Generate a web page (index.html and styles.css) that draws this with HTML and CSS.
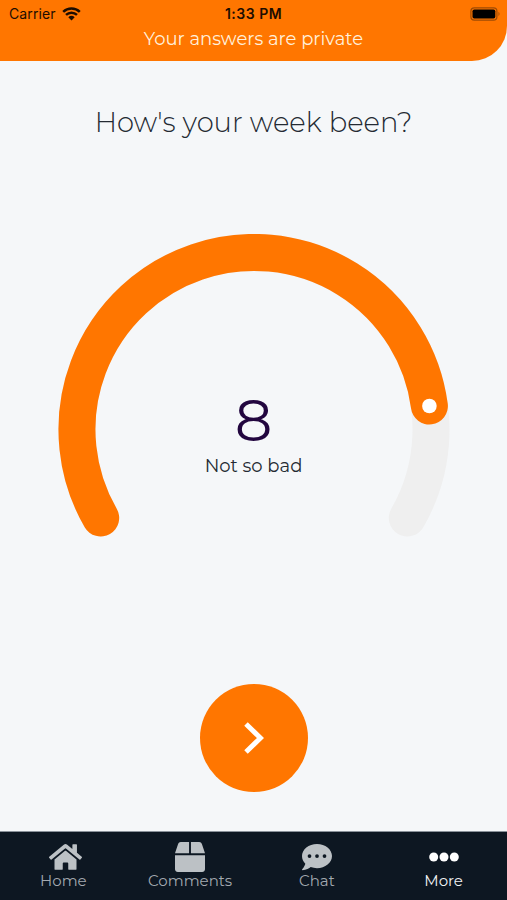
FILE: index.html
```html
<!DOCTYPE html>
<html lang="en">

<head>
  <meta charset="UTF-8">
  <meta name="viewport" content="width=device-width, initial-scale=1.0">
  <title>Your week</title>
  <link rel="stylesheet" href="styles.css">
</head>

<body>
  <header class="header">
    <div class="status">
      <div class="carrier">
        <span>Carrier</span>
        <svg width="19" height="14" viewBox="0 0 19 14">
          <path d="M1.2 4.9a12 12 0 0 1 16.6 0M4 7.9a8 8 0 0 1 11 0" fill="none" stroke="#1d0d00" stroke-width="2.5" />
          <path d="M9.5 13.6L6.3 10.3a4.7 4.7 0 0 1 6.4 0z" fill="#1d0d00" />
        </svg>
      </div>
      <div class="time">1:33 PM</div>
      <div class="battery">
        <svg width="31" height="14" viewBox="0 0 31 14">
          <rect x=".9" y=".8" width="26" height="12.4" rx="3.4" fill="none" stroke="#9e4b05" stroke-width="1.2" />
          <rect x="2.5" y="2.5" width="22.8" height="9" rx="1.8" fill="#000" />
          <path d="M28.5 4.8q2 2.2 0 4.4z" fill="#9e4b05" />
        </svg>
      </div>
    </div>
    <p class="private">Your answers are private</p>
  </header>

  <main class="main">
    <h1 class="title">How's your week been?</h1>

    <div class="dial">
      <svg class="ring" width="392" height="306" viewBox="0 0 392 306">
        <path class="track" d="M42.7 284A177 177 0 1 1 349.3 284" />
        <path class="value" d="M42.7 284A177 177 0 1 1 371.4 172" />
        <circle cx="371.4" cy="172" r="7.3" fill="#fff" />
      </svg>
      <div class="score">
        <strong class="number">8</strong>
        <span class="label">Not so bad</span>
      </div>
    </div>

    <button class="next" aria-label="Next">
      <svg width="20" height="32" viewBox="0 0 20 32">
        <path d="M2 2L16.5 16L2 30" fill="none" stroke="#fff" stroke-width="5" />
      </svg>
    </button>
  </main>

  <nav class="tabs">
    <a class="tab">
      <svg class="home-icon" width="33" height="30" viewBox="0 0 576 512">
        <path d="M280.37 148.26L96 300.11V464a16 16 0 0 0 16 16l112.06-.29a16 16 0 0 0 15.92-16V368a16 16 0 0 1 16-16h64a16 16 0 0 1 16 16v95.64a16 16 0 0 0 16 16.05L464 480a16 16 0 0 0 16-16V300L295.67 148.26a12.19 12.19 0 0 0-15.3 0zM571.6 251.47L488 182.56V44.05a12 12 0 0 0-12-12h-56a12 12 0 0 0-12 12v72.61L318.47 43a48 48 0 0 0-61 0L4.34 251.47a12 12 0 0 0-1.6 16.9l25.5 31A12 12 0 0 0 45.15 301l235.22-193.74a12.19 12.19 0 0 1 15.3 0L530.9 301a12 12 0 0 0 16.9-1.6l25.5-31a12 12 0 0 0-1.7-16.93z" />
      </svg>
      <span>Home</span>
    </a>
    <a class="tab">
      <svg width="30" height="30" viewBox="0 0 512 512">
        <path d="M509.5 184.6L458.9 32.8C452.4 13.2 434.1 0 413.4 0H272v192h238.7c-.4-2.5-.4-5-1.2-7.4zM240 0H98.6c-20.7 0-39 13.2-45.5 32.8L2.5 184.6c-.8 2.4-.8 4.9-1.2 7.4H240V0zM0 224v240c0 26.5 21.5 48 48 48h416c26.5 0 48-21.5 48-48V224H0z" />
      </svg>
      <span>Comments</span>
    </a>
    <a class="tab">
      <svg width="30" height="30" viewBox="0 0 512 512">
        <path d="M256 32C114.6 32 0 125.1 0 240c0 49.6 21.4 95 57 130.7C44.5 421.1 2.7 466 2.2 466.5c-2.2 2.3-2.8 5.7-1.5 8.7S4.8 480 8 480c66.3 0 116-31.8 140.6-51.4 32.7 12.3 69 19.4 107.4 19.4 141.4 0 256-93.1 256-208S397.4 32 256 32z" />
        <g fill="#0d1722">
          <circle cx="128" cy="240" r="32" />
          <circle cx="256" cy="240" r="32" />
          <circle cx="384" cy="240" r="32" />
        </g>
      </svg>
      <span>Chat</span>
    </a>
    <a class="tab active">
      <svg width="30" height="30" viewBox="0 0 30 30">
        <circle cx="4.7" cy="15" r="4.5" />
        <circle cx="15" cy="15" r="4.5" />
        <circle cx="25.3" cy="15" r="4.5" />
      </svg>
      <span>More</span>
    </a>
  </nav>
</body>

</html>
```

FILE: styles.css
```css
* {
  padding: 0;
  margin: 0;
  box-sizing: border-box;
}

body {
  display: flex;
  flex-direction: column;
  height: 900px;
  background: #f5f7f9;
  font-family: Montserrat, Inter, "Open Sans", sans-serif;
  color: #242a33;
  overflow: hidden;
}

.header {
  height: 61px;
  background: #ff7600;
  border-bottom-right-radius: 35px;
}

.status {
  display: grid;
  grid-template-columns: 1fr auto 1fr;
  align-items: center;
  height: 27px;
  padding: 0 6px 0 9px;
  font-family: Inter, sans-serif;
  font-size: 14px;
  color: #1d0d00;
}

.carrier {
  display: flex;
  align-items: center;
  gap: 6px;
  letter-spacing: .1px;
}

.time {
  margin-left: -3px;
  font-weight: 600;
  letter-spacing: .5px;
}

.battery {
  display: flex;
  justify-content: flex-end;
}

.private {
  line-height: 24px;
  text-align: center;
  font-size: 18px;
  color: #fff0dc;
}

.main {
  flex: 1;
  display: flex;
  flex-direction: column;
  align-items: center;
}

.title {
  margin-top: 43px;
  line-height: 36px;
  font-size: 27.4px;
  font-weight: 350;
}

.dial {
  display: grid;
  margin-top: 94px;
}

.ring,
.score {
  grid-area: 1 / 1;
}

.track,
.value {
  fill: none;
  stroke-width: 37;
  stroke-linecap: round;
}

.track {
  stroke: #efefef;
}

.value {
  stroke: #ff7600;
}

.score {
  display: flex;
  flex-direction: column;
  align-items: center;
  padding-top: 154px;
}

.number {
  line-height: 64px;
  font-size: 59px;
  font-weight: 400;
  color: #22063f;
}

.label {
  margin-top: 2px;
  line-height: 24px;
  font-size: 18px;
}

.next {
  display: flex;
  align-items: center;
  justify-content: center;
  width: 108px;
  height: 108px;
  margin-top: 144px;
  border: 0;
  border-radius: 50%;
  background: #ff7600;
}

.tabs {
  display: grid;
  grid-template-columns: repeat(4, 1fr);
  height: 69px;
  padding-top: 10px;
  border-top: 1px solid #8a929a;
  background: #0d1722;
}

.tab {
  display: flex;
  flex-direction: column;
  align-items: center;
  font-size: 15px;
  line-height: 18px;
  color: #a3a9b0;
  fill: #bcc1c5;
}

.home-icon {
  margin-left: 5px;
}

.active {
  color: #f0f2f4;
  fill: #fff;
}
```
